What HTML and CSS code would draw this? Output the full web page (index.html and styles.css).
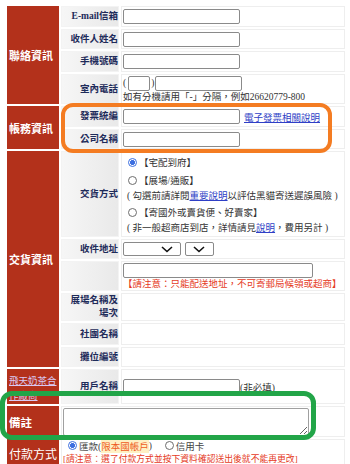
FILE: index.html
```html
<!doctype html>
<html lang="zh-Hant">
<head>
  <meta charset="utf-8">
  <title>訂購資料</title>
  <link rel="stylesheet" href="styles.css">
</head>
<body>
  <div class="page">
    <table class="form">
      <colgroup><col class="c-sec"><col class="c-lbl"><col></colgroup>

      <tr class="h21">
        <th class="sec" rowspan="4">聯絡資訊</th>
        <td class="lbl">E-mail信箱</td>
        <td class="val"><input type="text" class="txt w117"></td>
      </tr>
      <tr class="h20">
        <td class="lbl">收件人姓名</td>
        <td class="val"><input type="text" class="txt w117"></td>
      </tr>
      <tr class="h21">
        <td class="lbl">手機號碼</td>
        <td class="val"><input type="text" class="txt w117"></td>
      </tr>
      <tr class="h30">
        <td class="lbl">室內電話</td>
        <td class="val">
          <div class="line">(<input type="text" class="txt w22">)<input type="text" class="txt w87"></div>
          <div class="note">如有分機請用「-」分隔，例如26620779-800</div>
        </td>
      </tr>

      <tr class="h21">
        <th class="sec" rowspan="2">帳務資訊</th>
        <td class="lbl">發票統編</td>
        <td class="val"><div class="line"><input type="text" class="txt w117"><a class="link gap" href="#">電子發票相關說明</a></div></td>
      </tr>
      <tr class="h20">
        <td class="lbl">公司名稱</td>
        <td class="val"><input type="text" class="txt w117"></td>
      </tr>

      <tr class="h86">
        <th class="sec" rowspan="6">交貨資訊</th>
        <td class="lbl">交貨方式</td>
        <td class="val">
          <div class="opts">
            <div class="opt"><span class="radio on"></span>【宅配到府】</div>
            <div class="opt"><span class="radio"></span>【展場/通販】</div>
            <div class="hint">( 勾選前請詳閱<a class="link" href="#">重要說明</a>以評估黑貓寄送遲誤風險 )</div>
            <div class="opt"><span class="radio"></span>【寄國外或賣貨便、好賣家】</div>
            <div class="hint">( 非一般超商店到店，詳情請見<a class="link" href="#">說明</a>，費用另計 )</div>
          </div>
        </td>
      </tr>
      <tr class="h20">
        <td class="lbl">收件地址</td>
        <td class="val">
          <div class="line sels">
            <span class="sel w58"><svg width="12" height="7" viewBox="0 0 12 7"><polyline points="1,1 6,5.5 11,1" fill="none" stroke="#111" stroke-width="1.6"/></svg></span>
            <span class="sel w29"><svg width="12" height="7" viewBox="0 0 12 7"><polyline points="1,1 6,5.5 11,1" fill="none" stroke="#111" stroke-width="1.6"/></svg></span>
          </div>
        </td>
      </tr>
      <tr class="h30">
        <td class="lbl"></td>
        <td class="val">
          <div class="line"><input type="text" class="txt w190"></div>
          <div class="note warn">【請注意：只能配送地址，不可寄郵局候領或超商】</div>
        </td>
      </tr>
      <tr class="h28">
        <td class="lbl">展場名稱及場次</td>
        <td class="val"></td>
      </tr>
      <tr class="h22">
        <td class="lbl">社團名稱</td>
        <td class="val"></td>
      </tr>
      <tr class="h20">
        <td class="lbl">攤位編號</td>
        <td class="val"></td>
      </tr>

      <tr class="h31">
        <th class="sec partner"><a href="#">飛天奶茶合作廠商</a></th>
        <td class="lbl">用戶名稱</td>
        <td class="val"><div class="line"><input type="text" class="txt w117">(非必填)</div></td>
      </tr>

      <tr class="h31">
        <th class="sec big">備註</th>
        <td class="val wide" colspan="2"><textarea class="memo"></textarea></td>
      </tr>

      <tr class="h27">
        <th class="sec big thin">付款方式</th>
        <td class="val wide top" colspan="2">
          <div class="pay">
            <span class="radio on"></span>匯款(<span class="hl">限本國帳戶</span>)
            <span class="radio later"></span>信用卡
          </div>
          <div class="note warn pay-note">[請注意：選了付款方式並按下資料確認送出後就不能再更改]</div>
        </td>
      </tr>
    </table>

    <div class="mark mark-orange"></div>
    <div class="mark mark-green"></div>
  </div>
</body>
</html>
```

FILE: styles.css
```css
body {
  margin: 0;
  background: #fff;
  color: #333;
  font-family: "Liberation Serif", "Noto Sans CJK TC", serif;
  font-size: 9.5px;
}
.page {
  position: relative;
  padding: 4px 0 0 5px;
}

.form {
  width: 342px;
  table-layout: fixed;
  border-collapse: separate;
  border-spacing: 2px;
}
.c-sec { width: 52px; }
.c-lbl { width: 58px; }

.h20 { height: 20px; }
.h21 { height: 21px; }
.h22 { height: 22px; }
.h27 { height: 27px; }
.h28 { height: 28px; }
.h30 { height: 30px; }
.h31 { height: 31px; }
.h86 { height: 86px; }

td, th {
  padding: 0;
  vertical-align: middle;
}

/* red section column */
.sec {
  background: #b3311b;
  color: #fff;
  font-size: 11px;
  font-weight: bold;
  text-align: left;
  padding: 0 2px;
}
.sec.big { font-size: 11.5px; }
.sec.thin { font-weight: normal; font-size: 12px; }
.partner {
  padding-top: 5px;
  font-size: 9.5px;
  font-weight: normal;
  line-height: 15px;
}
.partner a { color: #d9c9f3; }

/* grey label column */
.lbl {
  background: linear-gradient(to right, #f6f6f6, #e9e9e9);
  border: 1px solid #f3f3f3;
  color: #1e2b5a;
  font-weight: bold;
  text-align: right;
  line-height: 13px;
}

/* white value column */
.val {
  border: 1px solid #eeeeee;
  background: #fff;
  padding-left: 1px;
}
.val.top { vertical-align: top; }

.line {
  display: flex;
  align-items: center;
  height: 16px;
}
.txt {
  box-sizing: border-box;
  height: 15px;
  margin: 0;
  padding: 0 2px;
  border: 1px solid #8a8a8a;
  border-radius: 2px;
  background: #fff;
  font: inherit;
}
.w22 { width: 22px; margin: 0 1px 0 2px; }
.w87 { width: 87px; margin-left: 1px; }
.w117 { width: 117px; }
.w190 { width: 190px; }

.note {
  line-height: 12px;
  white-space: nowrap;
}
.warn { color: #e5391d; }

.link { color: #2f3fc6; }
.gap { margin-left: 4px; }

/* delivery options */
.opts { padding-left: 4px; }
.opt {
  display: flex;
  align-items: center;
  height: 18px;
}
.hint {
  line-height: 14px;
  white-space: nowrap;
}
.radio {
  display: inline-block;
  box-sizing: border-box;
  width: 9px;
  height: 9px;
  margin: 0 2px 0 1px;
  border: 1px solid #6d6d6d;
  border-radius: 50%;
  background: #fff;
  vertical-align: middle;
}
.radio.on {
  border-color: #3d6fe0;
  background: radial-gradient(circle, #3d6fe0 0 2.2px, #fff 2.7px);
}

.sels { gap: 4px; }
.sel {
  box-sizing: border-box;
  display: inline-flex;
  align-items: center;
  justify-content: flex-end;
  height: 14px;
  padding-right: 7px;
  border: 1px solid #8a8a8a;
  border-radius: 2px;
  background: #fff;
}
.w58 { width: 58px; }
.w29 { width: 29px; padding-right: 8px; }

.wide { padding-left: 1px; }
.memo {
  display: block;
  box-sizing: border-box;
  width: 246px;
  height: 28px;
  margin: 0;
  border: 1px solid #a0a0a0;
  border-radius: 2px;
  font: inherit;
}

.pay {
  display: flex;
  align-items: center;
  height: 11px;
  padding-left: 4px;
  color: #444;
}
.hl {
  color: #ee5b1c;
  background: #fff1c4;
}
.later { margin-left: 13px; }
.pay-note {
  font-size: 8.8px;
  line-height: 16px;
}

/* annotation frames drawn over the form */
.mark {
  position: absolute;
  box-sizing: border-box;
  border-style: solid;
  border-radius: 12px;
  pointer-events: none;
}
.mark-orange {
  left: 61px;
  top: 103px;
  width: 271px;
  height: 50px;
  border-width: 4px;
  border-color: #f47c22;
}
.mark-green {
  left: 0;
  top: 391px;
  width: 316px;
  height: 49px;
  border-width: 5px;
  border-color: #22a548;
}
```
